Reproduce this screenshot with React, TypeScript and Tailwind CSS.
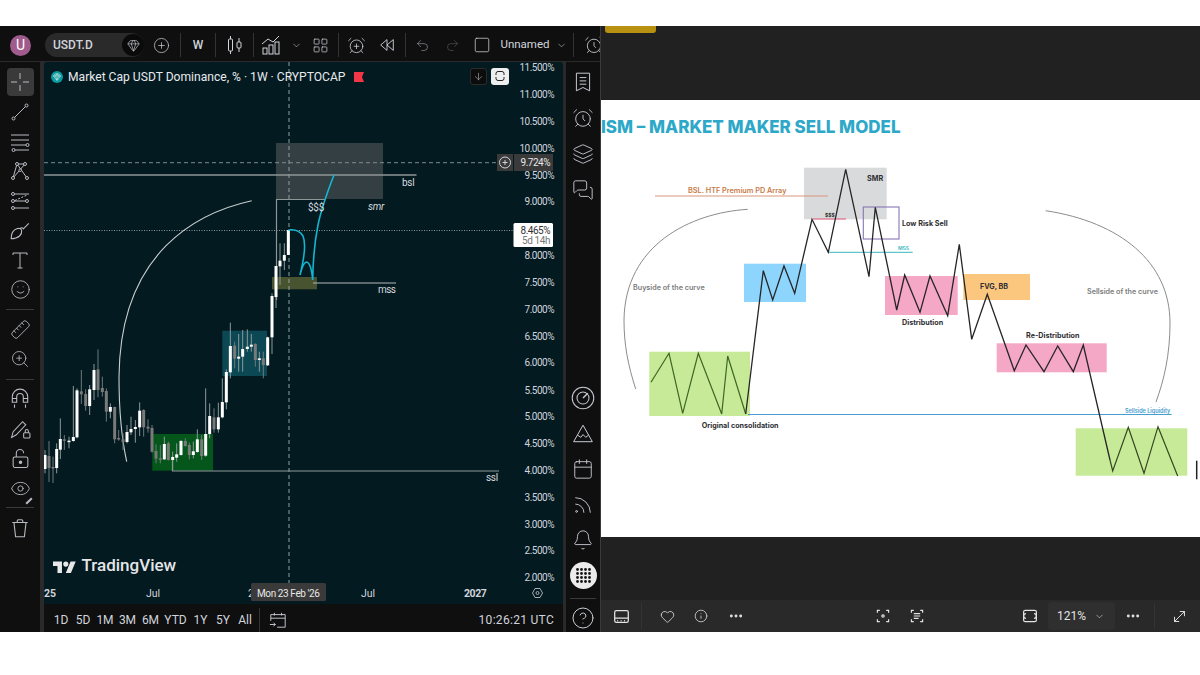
import type { ReactNode } from "react";
import {
  AlarmClock,
  AlarmClockPlus,
  ArrowDown,
  Bell,
  Calendar,
  ChevronDown,
  CircleHelp,
  CirclePlus,
  Ellipsis,
  Eye,
  Gem,
  Heart,
  Info,
  Layers,
  LayoutGrid,
  MessagesSquare,
  MoveDiagonal,
  Redo2,
  Rss,
  Ruler,
  Smile,
  Square,
  Undo2,
  ZoomIn,
} from "lucide-react";

function Svg({ children, size = 20, weight = 1 }: { children: ReactNode; size?: number; weight?: number }) {
  return (
    <svg width={size} height={size} viewBox="0 0 20 20" fill="none" stroke="currentColor" strokeWidth={weight}>
      {children}
    </svg>
  );
}

// drawing tools that lucide has no match for
const CrossIcon = () => (
  <Svg>
    <path d="M10 1v6M10 13v6M1 10h6M13 10h6" />
  </Svg>
);
const TrendIcon = () => (
  <Svg>
    <path d="M4.5 15.5 15.5 4.5" />
    <circle cx="3.5" cy="16.5" r="1.5" />
    <circle cx="16.5" cy="3.5" r="1.5" />
  </Svg>
);
const FibIcon = () => (
  <Svg>
    <path d="M1 3h18M1 8h18M1 13h15M5 18h14" />
    <circle cx="17.5" cy="13" r="1.5" />
    <circle cx="3.5" cy="18" r="1.5" />
  </Svg>
);
const PatternIcon = () => (
  <Svg>
    <path d="M3 17 7 3h8L3 17ZM7 3l10 14" />
    <circle cx="3" cy="17" r="1.5" fill="#0f0f0f" />
    <circle cx="7" cy="3" r="1.5" fill="#0f0f0f" />
    <circle cx="15" cy="3" r="1.5" fill="#0f0f0f" />
    <circle cx="17" cy="17" r="1.5" fill="#0f0f0f" />
    <circle cx="10.2" cy="9.2" r="1.3" fill="#0f0f0f" />
  </Svg>
);
const ForecastIcon = () => (
  <Svg>
    <path d="M3 3h16M3 10h14M3 17h16" />
    <path d="M5 9.5 17 4" strokeDasharray="2 1.5" />
    <circle cx="3" cy="3" r="1.5" fill="#0f0f0f" />
    <circle cx="3" cy="10" r="1.5" fill="#0f0f0f" />
    <circle cx="17" cy="10" r="1.5" fill="#0f0f0f" />
    <circle cx="3" cy="17" r="1.5" fill="#0f0f0f" />
  </Svg>
);
const BrushIcon = () => (
  <Svg size={22}>
    <path d="M2 17c0-5 2-8 5-9 2-1 4 0 4.5 1.5C12 13 9 17 2 17Z" />
    <path d="M10 8c1-1 2-1.5 3 0l5-5" />
  </Svg>
);
const TextIcon = () => (
  <Svg>
    <path d="M3 5V3h14v2M10 3v15M7.5 18h5" />
  </Svg>
);
const MagnetIcon = () => (
  <Svg size={22}>
    <path d="M3 13V8a7 7 0 0 1 14 0v5h-4V8a3 3 0 0 0-6 0v5H3ZM3 9.5h4M13 9.5h4M5 15v3M15 15v3" />
  </Svg>
);
const OpenLockIcon = () => (
  <Svg size={21}>
    <rect x="3" y="8.5" width="14" height="10" rx="1.5" />
    <path d="M6 8.5V5a3.5 3.5 0 0 1 7 0" />
    <circle cx="10" cy="13.5" r="1.2" fill="currentColor" />
  </Svg>
);
const BinIcon = () => (
  <Svg size={22}>
    <path d="M3 5h14M7.5 5V3.5a1 1 0 0 1 1-1h3a1 1 0 0 1 1 1V5M4.5 5 6 18h8l1.5-13" />
  </Svg>
);
const CandleIcon = () => (
  <Svg>
    <path d="M5.5 1v3M5.5 16v3M14 3v4M14 13v4" />
    <rect x="3.5" y="4" width="4" height="12" rx="1" />
    <rect x="12" y="7" width="4" height="6" rx="1" />
  </Svg>
);
const IndicatorIcon = () => (
  <Svg>
    <path d="M1 9 7 4l5 3 6-6" />
    <rect x="2" y="13" width="4" height="6" />
    <rect x="8" y="10" width="4" height="9" />
    <rect x="14" y="7" width="4" height="12" />
  </Svg>
);
const ReplayIcon = () => (
  <Svg size={18}>
    <path d="M10 4 3 10l7 6ZM17 4l-7 6 7 6Z" />
  </Svg>
);
const PencilLockIcon = () => (
  <Svg size={21}>
    <path d="M1.5 18.5 3 13 12 3.5l3 3L6 16Z" />
    <rect x="13" y="14" width="6" height="5" rx="1" />
    <path d="M14.5 14v-1.5a1.5 1.5 0 0 1 3 0V14" />
  </Svg>
);
const EyeBrushIcon = () => (
  <div className="relative">
    <Eye size={21} strokeWidth={1} />
    <span className="absolute bottom-[-3px] right-[-2px] h-[2px] w-[8px] -rotate-45 bg-[#b8bbc2]" />
  </div>
);
const RadarIcon = () => (
  <Svg size={24} weight={0.85}>
    <circle cx="10" cy="10" r="9" />
    <circle cx="10" cy="10" r="5" />
    <path d="m10 10 4-4" strokeWidth="1.2" />
  </Svg>
);
const PeakIcon = () => (
  <Svg size={22} weight={0.9}>
    <path d="M10 2 1.5 17h17ZM5 11l3 2 2-2.5 2.5 2.5L15 11" />
  </Svg>
);
const WatchIcon = () => (
  <Svg size={22} weight={0.9}>
    <path d="M4 2h12v16l-6-3-6 3ZM7 6h6M7 9h6M7 12h6" />
  </Svg>
);
const FrameIcon = () => (
  <Svg size={16} weight={1.5}>
    <rect x="2" y="3" width="16" height="14" rx="2" />
    <path d="M5 7a3 3 0 0 0 0 6M15 7a3 3 0 0 1 0 6" />
  </Svg>
);
const ThumbIcon = () => (
  <Svg size={17} weight={1.5}>
    <rect x="2" y="3" width="16" height="14" rx="2" />
    <path d="M2 12h16M5 15h1M9 15h1M13 15h1" />
  </Svg>
);
const FocusIcon = () => (
  <Svg size={16} weight={1.5}>
    <path d="M3 6V3h3M14 3h3v3M17 14v3h-3M6 17H3v-3" />
    <circle cx="10" cy="10" r="1.5" />
  </Svg>
);
const ScanIcon = () => (
  <Svg size={16} weight={1.5}>
    <path d="M3 6V3h3M14 3h3v3M17 14v3h-3M6 17H3v-3M6 7h8M6 10h8M6 13h6" />
  </Svg>
);
const CalendarGoIcon = () => (
  <Svg size={18}>
    <path d="M2 11V4h16v14H9M2 8h16M6 2v3M14 2v3M1 15h6M5 13l2 2-2 2" />
  </Svg>
);

function Cell({ className, children }: { className: string; children: ReactNode }) {
  return <div className={`flex h-full shrink-0 items-center justify-center ${className}`}>{children}</div>;
}

const Sep = ({ className = "" }: { className?: string }) => (
  <div className={`h-[24px] w-px shrink-0 bg-[#333333] ${className}`} />
);

function TopBar() {
  return (
    <header className="flex h-[35px] shrink-0 items-center overflow-hidden bg-[#0f0f0f] pl-[10px] pt-[3px] text-[#d1d4dc]">
      <div className="flex h-[21px] w-[21px] shrink-0 items-center justify-center rounded-full bg-[#a05b8d] text-[14px] text-white">
        U
      </div>
      <div className="ml-[14px] flex h-[24px] w-[99px] shrink-0 items-center justify-between rounded-full bg-[#2a2a2a] pl-[8px] text-[12px] font-medium">
        USDT.D
        <span className="flex h-[22px] w-[22px] items-center justify-center rounded-full bg-[#0a0a0a]">
          <Gem size={13} strokeWidth={1.2} />
        </span>
      </div>
      <Cell className="w-[34px]">
        <CirclePlus size={17} strokeWidth={1} />
      </Cell>
      <Sep className="ml-[2px]" />
      <Cell className="w-[34px] text-[12px] font-medium">W</Cell>
      <Sep />
      <Cell className="w-[37px]">
        <CandleIcon />
      </Cell>
      <Sep />
      <Cell className="w-[34px]">
        <IndicatorIcon />
      </Cell>
      <Cell className="w-[16px]">
        <ChevronDown size={11} strokeWidth={1.2} />
      </Cell>
      <Cell className="w-[32px]">
        <LayoutGrid size={17} strokeWidth={1} />
      </Cell>
      <Sep className="ml-[2px]" />
      <Cell className="w-[34px]">
        <AlarmClockPlus size={19} strokeWidth={1} />
      </Cell>
      <Cell className="w-[28px]">
        <ReplayIcon />
      </Cell>
      <Sep className="ml-[4px]" />
      <Cell className="w-[32px] text-[#9a9da3]">
        <Undo2 size={15} strokeWidth={1} />
      </Cell>
      <Cell className="w-[28px] text-[#55585c]">
        <Redo2 size={15} strokeWidth={1} />
      </Cell>
      <Cell className="w-[32px]">
        <Square size={18} strokeWidth={1} />
      </Cell>
      <Cell className="ml-[3px] w-[48px] text-[11.5px]">Unnamed</Cell>
      <Cell className="w-[24px]">
        <ChevronDown size={11} strokeWidth={1.2} />
      </Cell>
      <Sep />
      <Cell className="w-[40px]">
        <AlarmClock size={20} strokeWidth={1} />
      </Cell>
    </header>
  );
}

const Tool = ({ children }: { children: ReactNode }) => (
  <div className="flex h-[29.7px] w-full shrink-0 items-center justify-center">{children}</div>
);
const ToolSep = () => (
  <div className="flex h-[10px] w-full shrink-0 items-center justify-center">
    <span className="h-px w-[28px] bg-[#3a3a3a]" />
  </div>
);

function LeftTools() {
  return (
    <aside className="flex w-[40px] shrink-0 flex-col bg-[#0f0f0f] pt-[5.3px] text-[#b8bbc2]">
      <Tool>
        <div className="flex h-[28px] w-[27px] items-center justify-center rounded-[4px] bg-[#3a3a3a]">
          <CrossIcon />
        </div>
      </Tool>
      <Tool>
        <TrendIcon />
      </Tool>
      <Tool>
        <FibIcon />
      </Tool>
      <Tool>
        <PatternIcon />
      </Tool>
      <Tool>
        <ForecastIcon />
      </Tool>
      <Tool>
        <BrushIcon />
      </Tool>
      <Tool>
        <TextIcon />
      </Tool>
      <Tool>
        <Smile size={21} strokeWidth={1} />
      </Tool>
      <ToolSep />
      <Tool>
        <Ruler size={21} strokeWidth={1} className="-scale-x-100" />
      </Tool>
      <Tool>
        <ZoomIn size={20} strokeWidth={1} />
      </Tool>
      <ToolSep />
      <Tool>
        <MagnetIcon />
      </Tool>
      <Tool>
        <PencilLockIcon />
      </Tool>
      <Tool>
        <OpenLockIcon />
      </Tool>
      <Tool>
        <EyeBrushIcon />
      </Tool>
      <ToolSep />
      <Tool>
        <BinIcon />
      </Tool>
    </aside>
  );
}

const SideItem = ({ children, className = "h-[36px]" }: { children: ReactNode; className?: string }) => (
  <div className={`flex w-full shrink-0 items-center justify-center ${className}`}>{children}</div>
);

function RightTools() {
  return (
    <aside className="flex w-[34px] shrink-0 flex-col bg-[#0f0f0f] pt-[2px] text-[#c8cbd2]">
      <SideItem>
        <WatchIcon />
      </SideItem>
      <SideItem>
        <AlarmClock size={22} strokeWidth={1} />
      </SideItem>
      <SideItem>
        <Layers size={22} strokeWidth={1} />
      </SideItem>
      <SideItem>
        <MessagesSquare size={22} strokeWidth={1} />
      </SideItem>
      <div className="flex-1" />
      <SideItem className="h-[35.4px]">
        <RadarIcon />
      </SideItem>
      <SideItem className="h-[35.4px]">
        <PeakIcon />
      </SideItem>
      <SideItem className="h-[35.4px]">
        <Calendar size={22} strokeWidth={1} />
      </SideItem>
      <SideItem className="h-[35.4px]">
        <Rss size={22} strokeWidth={1} />
      </SideItem>
      <SideItem className="h-[35.4px]">
        <Bell size={22} strokeWidth={1} />
      </SideItem>
      <SideItem className="h-[35.4px]">
        <svg width="27" height="27" viewBox="0 0 27 27">
          <circle cx="13.5" cy="13.5" r="13.5" fill="#ececec" />
          {[7.5, 11.5, 15.5, 19.5].map((y) =>
            [7.5, 11.5, 15.5, 19.5].map((x) => <circle key={`${x}-${y}`} cx={x} cy={y} r="1.4" fill="#161616" />),
          )}
        </svg>
      </SideItem>
      <SideItem className="h-[11px]">
        <span className="h-px w-[26px] bg-[#3a3a3a]" />
      </SideItem>
      <SideItem className="h-[28px]">
        <CircleHelp size={24} strokeWidth={1} />
      </SideItem>
    </aside>
  );
}

// x, body top, body bottom, wick top, wick bottom, white?
// read off the reference at 3x: page x = 60 + x / 3, page y = 310 + y / 3
const candles: [number, number, number, number, number, number][] = [
  [-45, 435, 477, 420, 490, 1],
  [-33, 438, 474, 393, 516, 0],
  [-21, 471, 474, 440, 519, 0],
  [-10, 417, 474, 400, 490, 1],
  [1, 387, 419, 325, 447, 1],
  [13, 388, 392, 375, 420, 0],
  [27, 392, 396, 380, 415, 1],
  [40, 381, 393, 228, 395, 1],
  [51, 241, 382, 235, 385, 1],
  [64, 244, 253, 180, 282, 0],
  [77, 252, 288, 238, 302, 0],
  [89, 238, 288, 225, 315, 1],
  [102, 180, 240, 162, 270, 1],
  [114, 178, 240, 118, 262, 0],
  [127, 234, 246, 200, 260, 0],
  [139, 243, 305, 235, 335, 0],
  [151, 291, 305, 280, 325, 1],
  [164, 291, 388, 290, 400, 0],
  [176, 384, 388, 360, 392, 0],
  [189, 388, 396, 370, 420, 0],
  [201, 366, 396, 345, 400, 1],
  [213, 357, 367, 320, 375, 1],
  [226, 351, 357, 330, 398, 1],
  [239, 302, 352, 277, 378, 1],
  [251, 300, 352, 298, 380, 0],
  [264, 350, 356, 328, 368, 0],
  [276, 354, 425, 345, 428, 0],
  [288, 423, 446, 403, 460, 0],
  [301, 445, 447, 405, 460, 0],
  [313, 402, 448, 380, 450, 1],
  [325, 400, 450, 395, 452, 0],
  [338, 441, 450, 425, 480, 1],
  [350, 433, 443, 400, 455, 1],
  [363, 393, 435, 390, 437, 1],
  [376, 393, 408, 385, 410, 0],
  [388, 405, 435, 398, 448, 0],
  [400, 424, 435, 395, 445, 1],
  [412, 388, 426, 358, 428, 1],
  [425, 388, 438, 375, 450, 0],
  [437, 372, 437, 235, 440, 1],
  [449, 318, 372, 280, 385, 1],
  [462, 322, 358, 295, 368, 0],
  [475, 322, 358, 278, 368, 1],
  [487, 276, 322, 205, 325, 1],
  [499, 186, 277, 178, 298, 1],
  [511, 108, 187, 38, 205, 1],
  [524, 107, 146, 95, 175, 0],
  [536, 140, 146, 72, 185, 1],
  [548, 117, 140, 60, 185, 1],
  [562, 110, 117, 58, 125, 1],
  [574, 104, 110, 72, 125, 1],
  [586, 102, 150, 100, 170, 0],
  [598, 145, 150, 125, 185, 1],
  [610, 145, 165, 125, 205, 0],
  [623, 82, 166, 80, 168, 1],
  [636, -42, 82, -50, 132, 1],
  [648, -132, -39, -132, -6, 1],
  [660, -148, -131, -200, -75, 1],
  [673, -165, -148, -200, -120, 1],
  [685, -240, -165, -240, -165, 1],
];

const prices: [string, number][] = [
  ["11.500%", 67],
  ["11.000%", 94],
  ["10.500%", 121],
  ["10.000%", 148],
  ["9.500%", 175],
  ["9.000%", 201],
  ["8.000%", 255],
  ["7.500%", 282],
  ["7.000%", 309],
  ["6.500%", 336],
  ["6.000%", 362],
  ["5.500%", 390],
  ["5.000%", 416],
  ["4.500%", 443],
  ["4.000%", 470],
  ["3.500%", 497],
  ["3.000%", 524],
  ["2.500%", 550],
  ["2.000%", 577],
];

function ChartDrawing() {
  return (
    <svg className="block h-full w-full" viewBox="44 62 519 542">
      <rect x="276" y="143" width="107" height="56" fill="#333f43" />
      <rect x="222.3" y="330.7" width="44.7" height="45.3" fill="#0c4854" />
      <rect x="152.3" y="434" width="60.7" height="36.7" fill="#05561b" />
      <rect x="272" y="277" width="45" height="12.3" fill="#485330" />

      <line x1="289" y1="62" x2="289" y2="583" stroke="#93a0a2" strokeDasharray="4 3" />
      <line x1="44" y1="162.7" x2="497" y2="162.7" stroke="#7f8b8d" strokeDasharray="4 3" />
      <line x1="44" y1="230.5" x2="513" y2="230.5" stroke="#8c989a" strokeDasharray="1 1.5" />

      <line x1="44" y1="175" x2="416.5" y2="175" stroke="#8f9696" strokeWidth="1.4" />
      <path d="M276.5 300V199.5H325" fill="none" stroke="#8f9696" strokeWidth="1.2" />
      <line x1="313" y1="283" x2="396" y2="283" stroke="#b5baba" strokeWidth="1.2" />
      <path d="M172.5 456V471H499" fill="none" stroke="#8f9a9a" strokeWidth="1.2" />

      <path d="M251.7 200.7C200 212 120 250 119 377C119 410 122 440 126.7 461.7" fill="none" stroke="#c9cece" strokeWidth="1.1" />

      {candles.map(([x, top, bottom, wickTop, wickBottom, white]) => {
        const px = 60 + x / 3;
        return (
          <g key={x}>
            <line x1={px} y1={310 + wickTop / 3} x2={px} y2={310 + wickBottom / 3} stroke={white ? "#8b9899" : "#6d7a7b"} />
            <rect
              x={px - 1.5}
              y={310 + top / 3}
              width="3"
              height={Math.max((bottom - top) / 3, 1.5)}
              fill={white ? "#ffffff" : "#7a7a7a"}
            />
          </g>
        );
      })}

      <path
        d="M288.3 230C295 229 300 231 303 236C306 243 305 255 300 275C302 267 304 262 306.7 262C310 263 312 272 312.7 280C313 258 315 240 318 225C321 210 327 193 334 175"
        fill="none"
        stroke="#14b6cf"
        strokeWidth="1.6"
      />

      <g fontSize="10" fill="#d6d9de" letterSpacing="-0.3">
        <text x="402" y="186">bsl</text>
        <text x="308" y="211">$$$</text>
        <text x="368" y="210" fontStyle="italic">smr</text>
        <text x="378" y="293" letterSpacing="-0.6">mss</text>
        <text x="486" y="481">ssl</text>
      </g>

      <g fontSize="10" fill="#d1d4dc" textAnchor="end" letterSpacing="-0.5">
        {prices.map(([label, y]) => (
          <text key={label} x="554" y={y + 3.5}>
            {label}
          </text>
        ))}
      </g>

      <rect x="497" y="154" width="16" height="17" fill="#3a3a3a" />
      <circle cx="505" cy="162.5" r="5.5" fill="none" stroke="#d1d4dc" />
      <path d="M502.5 162.5h5M505 160v5" stroke="#d1d4dc" />
      <rect x="514" y="154" width="39" height="17" fill="#3a3a3a" />
      <text x="550" y="166" fontSize="10" fill="#e8e8e8" textAnchor="end" letterSpacing="-0.5">9.724%</text>
      <rect x="513.5" y="223" width="39.5" height="24" rx="1.5" fill="#ffffff" />
      <text x="550" y="233.5" fontSize="10" fill="#333333" textAnchor="end" letterSpacing="-0.5">8.465%</text>
      <text x="550" y="244" fontSize="10" fill="#777777" textAnchor="end" letterSpacing="-0.4">5d 14h</text>

      <g fontSize="10.5" fill="#d1d4dc">
        <text x="44" y="597" fontWeight="700">25</text>
        <text x="146" y="597">Jul</text>
        <text x="248" y="597">2</text>
        <text x="361" y="597">Jul</text>
        <text x="464" y="597" fontWeight="700" letterSpacing="-0.4">2027</text>
      </g>
      <rect x="251" y="583" width="75" height="18" rx="1.5" fill="#3a3a3a" />
      <text x="257" y="596.5" fontSize="10" fill="#e8e8e8" letterSpacing="-0.4">Mon 23 Feb '26</text>
      <path d="m532.5 593 2.5-4.5h5l2.5 4.5-2.5 4.5h-5Z" fill="none" stroke="#a8abb2" />
      <circle cx="537.5" cy="593" r="1.5" fill="none" stroke="#a8abb2" />

      <g transform="translate(53 559) scale(0.64)" fill="#e8e8e8">
        <path d="M14 22H7V11H0V4h14v18zM28 22h-8l7.5-18h8L28 22z" />
        <circle cx="20" cy="8" r="4" />
      </g>
      <text x="81.5" y="571" fontSize="17" fontWeight="500" fill="#e4e6e8">TradingView</text>
    </svg>
  );
}

function Chart() {
  return (
    <div className="relative h-[542px] overflow-hidden rounded-t-[3px] bg-[#031a20]">
      <ChartDrawing />
      <div className="absolute left-[7px] top-[6px] flex items-center gap-[5px] text-[12.1px] text-[#e8eaee]">
        <span className="flex h-[12px] w-[12px] items-center justify-center rounded-full bg-[#0b9a9e] text-white">
          <Gem size={8} strokeWidth={1.5} />
        </span>
        <span>Market Cap USDT Dominance, % · 1W · CRYPTOCAP</span>
        <svg className="ml-[4px]" width="10" height="10" viewBox="0 0 10 10">
          <path d="M0 0h10L8 5l2 5H0Z" fill="#f23645" />
        </svg>
      </div>
      <div className="absolute left-[426px] top-[5.5px] flex items-center gap-[4px]">
        <span className="flex h-[17px] w-[17px] items-center justify-center rounded-[3px] border border-[#2c2c2c] bg-[#0c0c0c] text-[#c8cbd2]">
          <ArrowDown size={11} strokeWidth={1.2} />
        </span>
        <span className="flex h-[17px] w-[18px] items-center justify-center rounded-[3px] bg-[#eeeeee] text-[#222222]">
          <svg width="12" height="12" viewBox="0 0 12 12" fill="none" stroke="currentColor">
            <path d="M2 5V3.5A2 2 0 0 1 4 1.5h4a2 2 0 0 1 2 2V5M2 7v1.5a2 2 0 0 0 2 2h4a2 2 0 0 0 2-2V7" />
          </svg>
        </span>
      </div>
    </div>
  );
}

const ranges: [string, string][] = [
  ["1D", "w-[22px]"],
  ["5D", "w-[22px]"],
  ["1M", "w-[22px]"],
  ["3M", "w-[23px]"],
  ["6M", "w-[23px]"],
  ["YTD", "w-[27px]"],
  ["1Y", "w-[23px]"],
  ["5Y", "w-[22px]"],
  ["All", "w-[22px]"],
];

function RangeBar() {
  return (
    <div className="flex h-[28px] items-center bg-[#0f0f0f] pl-[6px] pt-[3px] text-[12px] text-[#d1d4dc]">
      {ranges.map(([label, width]) => (
        <span key={label} className={`${width} shrink-0 text-center`}>
          {label}
        </span>
      ))}
      <Sep className="ml-[3px] h-[18px]" />
      <Cell className="w-[36px]">
        <CalendarGoIcon />
      </Cell>
      <span className="ml-auto pr-[9px] text-[12px] tracking-[0.3px]">10:26:21 UTC</span>
    </div>
  );
}

function TradingPanel() {
  return (
    <section className="flex w-[600px] shrink-0 flex-col bg-[#2a2a2a]">
      <TopBar />
      <div className="h-px shrink-0 bg-[#2a2a2a]" />
      <div className="flex flex-1">
        <LeftTools />
        <div className="ml-[4px] mr-[3px] flex w-[519px] shrink-0 flex-col">
          <Chart />
          <RangeBar />
        </div>
        <RightTools />
      </div>
    </section>
  );
}

const pricePath =
  "763.3,270.7 772.7,300 784,266 794.7,293.3 812,219.3 828.3,252.3 845.7,169.3 869,276.7 875.3,207.3 896.7,310 904.7,275 920,312.3 930,276 947.7,315.7 959.3,244.3 971.7,339.3 987.3,294.3 1014.3,370.7 1026,345 1044,371.7 1057.7,346 1073.3,371.7 1083.3,345 1110,460";

function ModelDiagram() {
  return (
    <svg className="block h-[437px] w-full bg-white" viewBox="601 100 599 437">
      <g fontFamily="Inter, sans-serif">
        <text x="601" y="133" fontSize="17" fontWeight="800" fill="#2da8c8">ISM – MARKET MAKER SELL MODEL</text>

        <rect x="804" y="167.7" width="82.7" height="51.6" fill="#d9dadb" />
        <rect x="744" y="263.7" width="62" height="38.3" fill="#8dd5fd" />
        <rect x="649.3" y="351.7" width="100.7" height="64.3" fill="#c6ea97" />
        <rect x="885" y="276" width="72.7" height="39" fill="#f5a7c6" />
        <rect x="963.3" y="274" width="66.7" height="26" fill="#fbc67d" />
        <rect x="996.7" y="343.3" width="110" height="29" fill="#f5a7c6" />
        <rect x="1075.7" y="428.3" width="111.6" height="47.4" fill="#c6ea97" />

        <line x1="655" y1="196" x2="828" y2="196" stroke="#d9977a" />
        <line x1="813" y1="219" x2="846" y2="219" stroke="#df5577" />
        <line x1="828" y1="252.3" x2="912.7" y2="252.3" stroke="#3ab7bf" />
        <line x1="748" y1="414.5" x2="1171.7" y2="414.5" stroke="#479dcf" strokeWidth="1.2" />
        <rect x="863.3" y="207" width="35.7" height="32" fill="none" stroke="#8676b4" strokeWidth="1.1" />

        <path d="M747.7 209.3C690 213 625 245 624 320C624 345 628 365 635.7 389" fill="none" stroke="#8c8c8c" />
        <path d="M1045.7 210.7C1120 222 1170 262 1170 323C1170 355 1164 380 1156 402" fill="none" stroke="#8c8c8c" />

        <polyline points="651,382.3 669,353.3 682.7,413.3 698.3,353.3 721.7,414 727.7,356 745.7,414" fill="none" stroke="#3f6722" strokeWidth="1.2" />
        <polyline points={`745.7,414 755,338 ${pricePath}`} fill="none" stroke="#262626" strokeWidth="1.3" />
        <polyline points="1110,460 1112.7,471 1128.3,427.3 1144,473.3 1158,426.7 1177.7,476" fill="none" stroke="#34461f" strokeWidth="1.2" />
        <line x1="1196.7" y1="460.7" x2="1196.7" y2="479.3" stroke="#222222" strokeWidth="1.5" />

        <g fontSize="7.2" fontWeight="700" fill="#2f2f33">
          <text x="867" y="181">SMR</text>
          <text x="902" y="226">Low Risk Sell</text>
          <text x="902" y="325">Distribution</text>
          <text x="980" y="289">FVG, BB</text>
          <text x="1026" y="338">Re-Distribution</text>
          <text x="701.7" y="427.5">Original consolidation</text>
        </g>
        <g fontSize="7.2" fontWeight="600" fill="#7c7c7c">
          <text x="633" y="290">Buyside of the curve</text>
          <text x="1087" y="293.5">Sellside of the curve</text>
        </g>
        <text x="688" y="192.5" fontSize="7.3" fontWeight="600" fill="#c87b48">BSL. HTF Premium PD Array</text>
        <text x="825" y="217" fontSize="5" fontWeight="700" fill="#333333">$$$</text>
        <text x="898" y="250" fontSize="5" fontWeight="600" fill="#3ab7bf">MSS</text>
        <text x="1125" y="412.5" fontSize="5.5" fontWeight="600" fill="#479dcf">Sellside Liquidity</text>
      </g>
    </svg>
  );
}

function ViewerBar() {
  return (
    <div className="flex h-[32px] shrink-0 items-center bg-[#292929] text-[#e2e2e2]">
      <Cell className="w-[40px]">
        <ThumbIcon />
      </Cell>
      <Sep className="h-[26px] bg-[#343434]" />
      <Cell className="ml-[8px] w-[34px]">
        <Heart size={15} strokeWidth={1.3} />
      </Cell>
      <Cell className="w-[34px]">
        <Info size={14} strokeWidth={1.3} />
      </Cell>
      <Cell className="w-[36px]">
        <Ellipsis size={16} strokeWidth={2.4} />
      </Cell>
      <Cell className="ml-[112px] w-[34px]">
        <FocusIcon />
      </Cell>
      <Cell className="w-[34px]">
        <ScanIcon />
      </Cell>
      <Cell className="ml-[79px] w-[34px]">
        <FrameIcon />
      </Cell>
      <div className="ml-px flex h-[28px] w-[67px] shrink-0 items-center justify-between rounded-[3px] bg-[#2f2f2f] pl-[9px] pr-[10px] text-[12px]">
        121%
        <ChevronDown size={11} strokeWidth={1.2} />
      </div>
      <Cell className="w-[36px]">
        <Ellipsis size={16} strokeWidth={2.4} />
      </Cell>
      <Sep className="ml-[3px] h-[26px] bg-[#343434]" />
      <Cell className="ml-[7px] w-[34px]">
        <MoveDiagonal size={17} strokeWidth={1.4} />
      </Cell>
    </div>
  );
}

function ViewerPanel() {
  return (
    <section className="flex w-[600px] shrink-0 flex-col border-l border-[#3a3a3a] bg-[#212121]">
      <div className="h-[74px] shrink-0 pl-[4px]">
        <div className="h-[7px] w-[51px] rounded-b-[3px] bg-[#b7910f]" />
      </div>
      <ModelDiagram />
      <div className="flex-1" />
      <ViewerBar />
    </section>
  );
}

export default function App() {
  return (
    <div className="flex h-[675px] w-[1200px] flex-col overflow-hidden bg-white font-[family-name:Roboto,sans-serif]">
      <div className="h-[26px] shrink-0" />
      <div className="flex h-[606px] shrink-0">
        <TradingPanel />
        <ViewerPanel />
      </div>
    </div>
  );
}
